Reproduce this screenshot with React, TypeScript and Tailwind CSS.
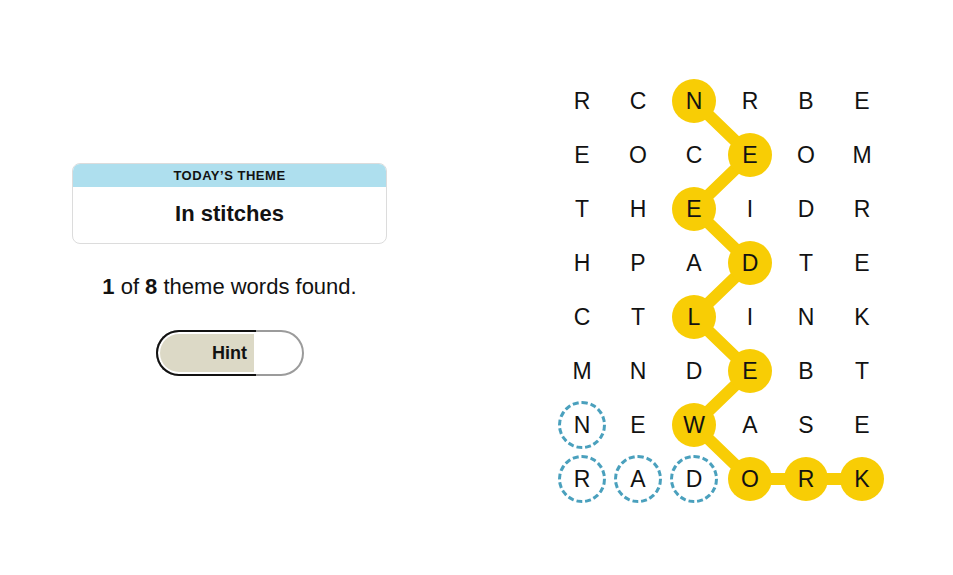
import React from 'react'

const GRID = [
  'RCNRBE',
  'EOCEOM',
  'THEIDR',
  'HPADTE',
  'CTLINK',
  'MNDEBT',
  'NEWASE',
  'RADORK',
]

const PATH: [number, number][] = [
  [0, 2], [1, 3], [2, 2], [3, 3], [4, 2], [5, 3], [6, 2], [7, 3], [7, 4], [7, 5],
]
const HINTED = ['6-0', '7-0', '7-1', '7-2']

const CW = 56
const CH = 54

export default function App() {
  const onPath = new Set(PATH.map(([r, c]) => `${r}-${c}`))
  const points = PATH.map(([r, c]) => `${c * CW + CW / 2},${r * CH + CH / 2}`).join(' ')

  return (
    <div className="flex h-[575px] w-[953px] bg-white font-['Liberation_Sans',Arial,sans-serif] text-[#121212]">
      <div className="ml-[72px] mt-[163px] flex w-[315px] flex-col items-center">
        <div className="w-full overflow-hidden rounded-lg border border-[#dcdcdc]">
          <div className="flex h-[23px] items-center justify-center bg-[#aedfee] text-[13px] font-bold tracking-[0.04em]">
            TODAY’S THEME
          </div>
          <div className="flex h-[56px] items-center justify-center pb-1 text-[22px] font-bold">
            In stitches
          </div>
        </div>
        <p className="mt-[29px] text-[22px] leading-[28px]">
          <b>1</b> of <b>8</b> theme words found.
        </p>
        <button
          type="button"
          className="relative mt-[29px] flex h-[46px] w-[148px] items-center justify-center rounded-full border-2 border-[#9b9b9b] bg-white"
        >
          <span className="absolute -left-[2px] -top-[2px] h-[46px] w-[100px] rounded-l-full border-y-2 border-l-2 border-[#121212] p-[2px]">
            <span className="block h-full w-full rounded-l-full bg-[#dcd9c6]" />
          </span>
          <span className="relative text-[18px] font-bold">Hint</span>
        </button>
      </div>

      <div className="relative ml-[167px] mt-[74px] h-[432px] w-[336px]">
        <svg className="absolute inset-0" width={336} height={432}>
          <polyline
            points={points}
            fill="none"
            stroke="#f8cd05"
            strokeWidth={12}
            strokeLinejoin="round"
            strokeLinecap="round"
          />
        </svg>
        <div className="relative grid grid-cols-6">
          {GRID.flatMap((row, r) =>
            row.split('').map((ch, c) => {
              const key = `${r}-${c}`
              const yellow = onPath.has(key)
              const hinted = HINTED.includes(key)
              return (
                <div key={key} className="flex h-[54px] w-14 items-center justify-center">
                  <div
                    className={
                      'flex items-center justify-center rounded-full text-[23px] ' +
                      (yellow ? 'h-[44px] w-[44px] bg-[#f8cd05] ' : '') +
                      (hinted ? 'h-[48px] w-[48px] border-[3px] border-dashed border-[#4aa0bd] ' : '') +
                      (!yellow && !hinted ? 'h-[44px] w-[44px] ' : '')
                    }
                  >
                    {ch}
                  </div>
                </div>
              )
            }),
          )}
        </div>
      </div>
    </div>
  )
}
